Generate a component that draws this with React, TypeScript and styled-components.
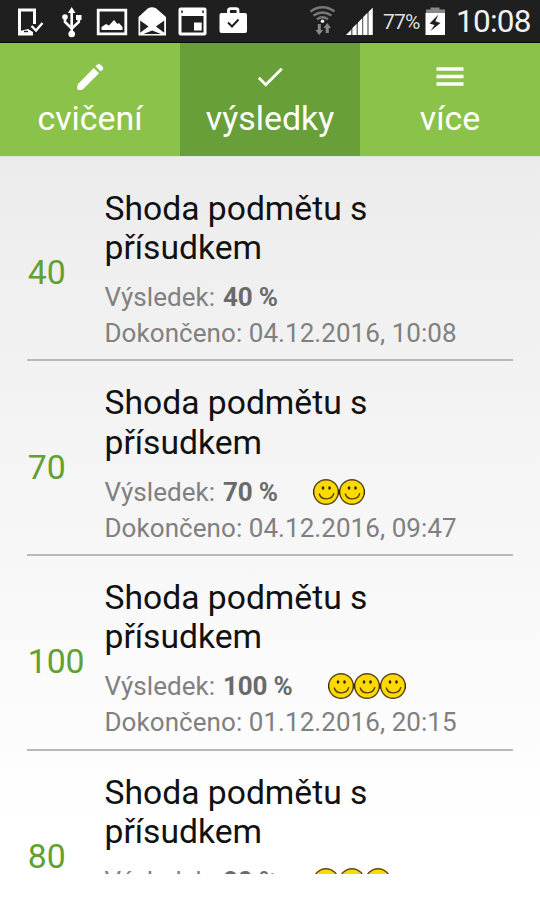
import React from "react";
import styled, { createGlobalStyle } from "styled-components";

const GlobalStyle = createGlobalStyle`
  * { box-sizing: border-box; }
  body { margin: 0; background: #fff; font-family: Roboto, "Noto Sans", sans-serif; }
`;

const Screen = styled.div`
  width: 540px;
  height: 900px;
  display: flex;
  flex-direction: column;
  overflow: hidden;
  background: #fff;
`;

const StatusBar = styled.header`
  height: 43px;
  flex: none;
  display: flex;
  justify-content: space-between;
  padding: 0 10px 0 14px;
  background: #1f1f1f;
  border-bottom: 1.5px solid #070707;
  color: #f2f2f2;
`;

const StatusGroup = styled.div`
  display: flex;
  align-items: flex-start;
`;

const Glyph = styled.svg`
  display: block;
  flex: none;
`;

const Percent = styled.span`
  width: 39px;
  margin-right: 2px;
  font-size: 21px;
  line-height: 45px;
  letter-spacing: -0.8px;
  white-space: nowrap;
  color: #dedede;
`;

const Clock = styled.span`
  width: 74px;
  font-size: 31.5px;
  line-height: 44px;
  letter-spacing: -0.75px;
  white-space: nowrap;
`;

const Tabs = styled.nav`
  flex: none;
  height: 114px;
  display: grid;
  grid-template-columns: repeat(3, 180px);
  border-bottom: 1px solid #dfe8d4;
`;

const Tab = styled.button<{ $active?: boolean }>`
  border: 0;
  padding: 15px 0 0;
  display: flex;
  flex-direction: column;
  align-items: center;
  background: ${(p) => (p.$active ? "#689f38" : "#8bc34a")};
  color: #fff;
  font: 400 33.9px/40px Roboto, "Noto Sans", sans-serif;
`;

const TabLabel = styled.span`
  margin-top: 5px;
`;

const List = styled.main`
  height: 717px;
  flex: none;
  overflow: hidden;
  padding: 9.5px 27px 0;
  background: linear-gradient(#ececec, #ffffff 94%);
`;

const Row = styled.article`
  height: 194.7px;
  display: grid;
  grid-template-columns: 77.5px 1fr;
  border-bottom: 2px solid #b9b9b9;
`;

const Score = styled.div`
  align-self: center;
  padding: 20px 0 0 0.7px;
  font-size: 33.75px;
  line-height: 40px;
  color: #5fa132;
`;

const Details = styled.div`
  padding-top: 22px;
`;

const Title = styled.h2`
  margin: 0;
  width: 300px;
  font-size: 33.65px;
  font-weight: 400;
  line-height: 39.5px;
  color: #111;
`;

const Line = styled.p`
  margin: 0;
  height: 36px;
  display: flex;
  align-items: center;
  font-size: 26px;
  line-height: 36px;
  letter-spacing: 0.06px;
  white-space: pre;
  color: #808080;

  &:first-of-type { margin-top: 11.5px; }
`;

const Strong = styled.strong`
  margin-left: 1.2px;
  font-weight: 700;
  letter-spacing: -0.15px;
  color: #6a6a6a;
`;

const Smileys = styled.span`
  display: flex;
  margin-left: 35px;
`;

const Smiley = () => (
  <Glyph width="26" height="28" viewBox="0 0 26 28">
    <circle cx="13" cy="14" r="12.3" fill="#fdd900" stroke="#5a4818" strokeWidth="1.4" />
    <path d="M0 14h1M25 14h1" stroke="#3a2a10" strokeWidth="5" />
    <ellipse cx="10" cy="10" rx="1.3" ry="1.7" fill="#2a2105" />
    <ellipse cx="16.5" cy="10" rx="1.3" ry="1.7" fill="#2a2105" />
    <path d="M6.2 15.5c1.5 7.2 13 7.2 14.6-.4" fill="none" stroke="#54430a" strokeWidth="1.4" />
  </Glyph>
);

const results = [
  { score: 40, smileys: 0, finished: "04.12.2016, 10:08" },
  { score: 70, smileys: 2, finished: "04.12.2016, 09:47" },
  { score: 100, smileys: 3, finished: "01.12.2016, 20:15" },
  { score: 80, smileys: 3 },
];

const StatusIcons = () => (
  <StatusGroup>
    <Glyph width="46" height="41" viewBox="14 0 46 41">
      <path d="M33 34H19.5V10h15v14" fill="none" stroke="#fff" strokeWidth="3" />
      <path d="M20 31l8-2 5 3v3H20z" fill="#fff" />
      <path d="M24 31.5h4" stroke="#1f1f1f" strokeWidth="1.4" />
      <path d="M31.5 26l4.5 4.5 6.5-7.5" fill="none" stroke="#fff" strokeWidth="2.3" />
    </Glyph>
    <Glyph width="34" height="41" viewBox="60 0 34 41">
      <path d="M71.7 12v22M65 17v5l6.7 6.5M78.8 18v4l-7 6.5" fill="none" stroke="#fff" strokeWidth="2.6" />
      <path d="M71.7 7l3.8 6h-7.6zM76 15h5.5v5H76z" fill="#fff" />
      <circle cx="65" cy="17" r="2.8" fill="#fff" />
      <circle cx="71.7" cy="34" r="3.3" fill="#fff" />
    </Glyph>
    <Glyph width="42" height="41" viewBox="94 0 42 41">
      <path d="M98.2 10.2h27.6v23.6H98.2z" fill="none" stroke="#fff" strokeWidth="2.8" />
      <path d="M101.5 30v-3l4.5-3 3 1.5 5-5.5 3.5 4 1.5-1 3.5 4v3z" fill="#fff" />
    </Glyph>
    <Glyph width="40" height="41" viewBox="136 0 40 41">
      <path d="M138.5 17L148 8.2q4-2 8 0l10 8.8v18.5h-27.5z" fill="#fff" />
      <path d="M140.2 20.5l8.3 6-8.3 6.2zM164.2 20.5l-8.3 6 8.3 6.2zM143.5 34l8.7-3.5 8.7 3.5z" fill="#1f1f1f" />
    </Glyph>
    <Glyph width="40" height="41" viewBox="176 0 40 41">
      <rect x="178.5" y="7.5" width="28" height="28" rx="2" fill="#fff" />
      <path d="M181.5 16h22v16.5h-22z" fill="#1f1f1f" />
      <path d="M182 10.5v2.5M203 10.5v2.5" stroke="#1f1f1f" strokeWidth="1.5" />
      <path d="M194 22.5h7.7v8H194z" fill="#fff" />
    </Glyph>
    <Glyph width="34" height="41" viewBox="216 0 34 41">
      <rect x="219.5" y="13" width="27.5" height="20" rx="2" fill="#fff" />
      <path d="M228.5 13v-2.5q0-1.8 2-1.8h5.5q2 0 2 1.8V13" fill="none" stroke="#fff" strokeWidth="2.8" />
      <path d="M228 22.5l4 4 6.5-7" fill="none" stroke="#1f1f1f" strokeWidth="2" />
    </Glyph>
  </StatusGroup>
);

const SystemIcons = () => (
  <StatusGroup>
    <Glyph width="36" height="41" viewBox="308 0 36 41">
      <g fill="none" stroke="#777" strokeWidth="2.4">
        <path d="M310.5 11.5q12-8.5 24 0" />
        <path d="M313.5 15.5q9-6 18 0" />
        <path d="M317 19.2q5.5-4 11 0" />
      </g>
      <circle cx="322.5" cy="21.3" r="1.8" fill="#eee" />
      <path d="M317.8 24h3v6h2.4l-4 5-3.7-5h2.3zM325.7 33v-5h-2.2l3.8-5 3.7 5h-2.2v5z" fill="#888" />
    </Glyph>
    <Glyph width="39" height="41" viewBox="344 0 39 41">
      <path d="M346 35L372.5 8v27z" fill="#707070" />
      <path d="M346 35l5-5v5zM352.5 35v-7l4-4v11zM358 35V22.5l4-4V35zM363.3 35V17l4-4v22zM368.7 35V11.8l4-4V35z" fill="#fff" />
    </Glyph>
    <Percent>77%</Percent>
    <Glyph width="32" height="41" viewBox="424 0 32 41">
      <path d="M426 9.5h4.5v-2h9v2h5.5V13h-19z" fill="#888" />
      <path d="M425.5 13H445v22h-19.5z" fill="#fff" />
      <path d="M438.5 14.5l-9 9 5 1.5-4 6 10-8-5.2-1.7z" fill="#1f1f1f" />
    </Glyph>
    <Clock>10:08</Clock>
  </StatusGroup>
);

export default function App() {
  return (
    <Screen>
      <GlobalStyle />
      <StatusBar>
        <StatusIcons />
        <SystemIcons />
      </StatusBar>
      <Tabs>
        <Tab>
          <Glyph width="36" height="36" viewBox="0 0 36 36" fill="#fff">
            <path d="M21.8 10l5.2 5.2L11.5 30.8q-1.2 1.2-3 1.2H6.5q-1.2 0-1.2-1.2V28.5q0-1.5 1.2-3z" />
            <path d="M23.5 8.3l2.1-2.1q1.2-1 2.4 0l2.8 2.8q1 1.2 0 2.4l-2.1 2.1z" />
          </Glyph>
          <TabLabel>cvičení</TabLabel>
        </Tab>
        <Tab $active>
          <Glyph width="34" height="36" viewBox="0 0 24 25.4" fill="#fff">
            <path d="M9 17.4l-4.2-4.2-1.4 1.4L9 20.2l12-12-1.4-1.4z" />
          </Glyph>
          <TabLabel>výsledky</TabLabel>
        </Tab>
        <Tab>
          <Glyph width="36" height="36" viewBox="0 0 36 36">
            <path d="M4.5 11h27M4.5 18.5h27M4.5 26h27" stroke="#fff" strokeWidth="3.3" />
          </Glyph>
          <TabLabel>více</TabLabel>
        </Tab>
      </Tabs>
      <List>
        {results.map((r, i) => (
          <Row key={i}>
            <Score>{r.score}</Score>
            <Details>
              <Title>Shoda podmětu s přísudkem</Title>
              <Line>
                {"Výsledek: "}
                <Strong>{r.score} %</Strong>
                {r.smileys > 0 && (
                  <Smileys>
                    {Array.from({ length: r.smileys }, (_, n) => (
                      <Smiley key={n} />
                    ))}
                  </Smileys>
                )}
              </Line>
              {r.finished && <Line>Dokončeno: {r.finished}</Line>}
            </Details>
          </Row>
        ))}
      </List>
    </Screen>
  );
}
